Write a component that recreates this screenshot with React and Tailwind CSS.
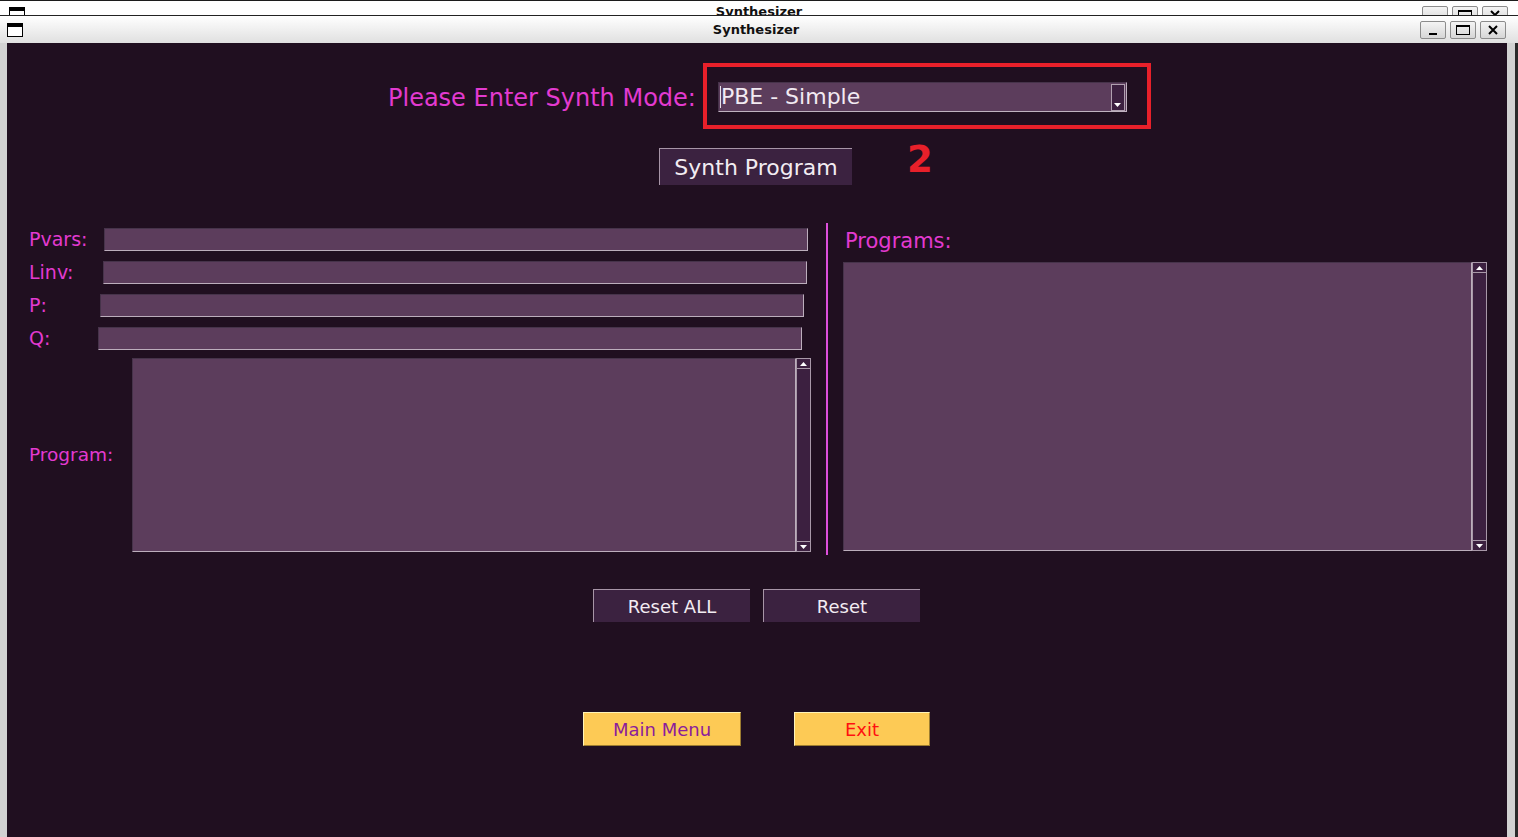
const FIELD = "bg-[#5c3d5c]";

function TitleButtons({ top = false }) {
  const base =
    "w-[26px] h-[18px] rounded-[2px] border border-[#8c8c8c] bg-gradient-to-b from-[#f4f4f4] to-[#d6d6d6] flex items-center justify-center";
  return (
    <div className={`flex gap-[4px] ${top ? "mt-[5px]" : ""}`}>
      <div className={base}>
        <svg width="12" height="12" viewBox="0 0 12 12">
          <rect x="2" y="9" width="8" height="2" fill="#000" />
        </svg>
      </div>
      <div className={base}>
        <svg width="16" height="12" viewBox="0 0 16 12">
          <rect x="1.5" y="1.5" width="13" height="9" fill="none" stroke="#000" strokeWidth="1" />
          <rect x="1" y="1" width="14" height="2" fill="#000" />
        </svg>
      </div>
      <div className={base}>
        <svg width="12" height="12" viewBox="0 0 12 12">
          <path d="M2 2 L10 10 M10 2 L2 10" stroke="#000" strokeWidth="2" />
        </svg>
      </div>
    </div>
  );
}

function WinIcon() {
  return <div className="w-[16px] h-[14px] border border-black border-t-[4px] bg-white" />;
}

function Scrollbar({ h }) {
  return (
    <div
      className="w-[15px] shrink-0 border border-[#a898a8] bg-[#3c2040] flex flex-col justify-between"
      style={{ height: h }}
    >
      <div className="h-[10px] border-b border-[#a898a8] flex items-center justify-center">
        <svg width="7" height="4" viewBox="0 0 7 4">
          <path d="M3.5 0 L7 4 L0 4 Z" fill="#fff" />
        </svg>
      </div>
      <div className="h-[10px] border-t border-[#a898a8] flex items-center justify-center">
        <svg width="7" height="4" viewBox="0 0 7 4">
          <path d="M0 0 L7 0 L3.5 4 Z" fill="#fff" />
        </svg>
      </div>
    </div>
  );
}

function Entry() {
  return (
    <div
      className={`w-[704px] h-[23px] ${FIELD} border-t border-l border-[#46334a] border-b border-r border-b-[#bcaebc] border-r-[#bcaebc]`}
    />
  );
}

function DarkButton({ children, className = "" }) {
  return (
    <div
      className={`bg-[#3b2240] border-t border-l border-[#a795a7] text-[#f2ecf2] flex items-center justify-center ${className}`}
    >
      {children}
    </div>
  );
}

function YellowButton({ children, className = "" }) {
  return (
    <div
      className={`bg-[#fdca55] border border-t-[#fff4b8] border-l-[#fff4b8] border-b-[#9c7c30] border-r-[#9c7c30] flex items-center justify-center text-[18px] ${className}`}
    >
      {children}
    </div>
  );
}

export default function App() {
  const mag = "text-[#e33ad0]";
  return (
    <div className="w-[1518px] h-[837px] overflow-hidden flex flex-col bg-[#d2d2d2] font-['DejaVu_Sans',sans-serif]">
      {/* window behind */}
      <div className="h-[15px] shrink-0 border-t border-[#1c1c1c] bg-white overflow-hidden grid grid-cols-[1fr_auto_1fr] items-start">
        <div className="pl-[9px] pt-[6px]">
          <WinIcon />
        </div>
        <div className="pt-[3px] text-[13px] font-bold leading-[16px] text-[#111]">Synthesizer</div>
        <div className="flex justify-end pr-[10px]">
          <TitleButtons top />
        </div>
      </div>

      {/* main title bar */}
      <div className="h-[28px] shrink-0 border-t border-[#222] bg-gradient-to-b from-white to-[#e0e0e0] grid grid-cols-[1fr_auto_1fr] items-center">
        <div className="pl-[7px]">
          <WinIcon />
        </div>
        <div className="text-[13px] font-bold text-[#111] pr-[6px]">Synthesizer</div>
        <div className="flex justify-end pr-[12px]">
          <TitleButtons />
        </div>
      </div>

      {/* body */}
      <div className="flex-1 flex">
        <div className="w-[7px] shrink-0 bg-[#d2d2d2]" />
        <div className="flex-1 bg-[#200f20] flex flex-col">
          {/* row 1 */}
          <div className="flex items-center pt-[20px] pl-[381px]">
            <div className={`${mag} text-[24px] leading-none pt-[4px]`}>Please Enter Synth Mode:</div>
            <div className="ml-[7px] w-[448px] h-[66px] border-4 border-[#e8202a] pl-[11px] pt-[15px]">
              <div
                className={`w-[409px] h-[30px] ${FIELD} border-t border-l border-[#46334a] border-b border-r border-b-[#c0b2c0] border-r-[#c0b2c0] flex items-center`}
              >
                <div className="w-px h-[22px] bg-[#e8e0e8] ml-[1px]" />
                <div className="text-[22px] leading-none text-[#f2eaf2]">PBE - Simple</div>
                <div className="ml-auto mr-[1px] w-[14px] h-[27px] bg-[#3c2040] border border-[#b0a0b0] flex items-end justify-center pb-[3px]">
                  <svg width="7" height="4" viewBox="0 0 7 4">
                    <path d="M0 0 L7 0 L3.5 4 Z" fill="#fff" />
                  </svg>
                </div>
              </div>
            </div>
          </div>

          {/* row 2 */}
          <div className="flex items-start pt-[19px] pl-[652px]">
            <DarkButton className="w-[193px] h-[37px] text-[22px]">Synth Program</DarkButton>
            <div className="ml-[55px] -mt-[11px] text-[37px] font-bold leading-[46px] text-[#e8202a]">2</div>
          </div>

          {/* main section */}
          <div className="flex items-start mt-[38px] pl-[22px]">
            {/* left */}
            <div className="w-[782px] shrink-0 flex flex-col pt-[5px]">
              <div className="flex flex-col gap-[10px]">
                <div className="flex items-center">
                  <div className={`w-[75px] ${mag} text-[19px] leading-none`}>Pvars:</div>
                  <Entry />
                </div>
                <div className="flex items-center">
                  <div className={`w-[74px] ${mag} text-[19px] leading-none`}>Linv:</div>
                  <Entry />
                </div>
                <div className="flex items-center">
                  <div className={`w-[71px] ${mag} text-[19px] leading-none`}>P:</div>
                  <Entry />
                </div>
                <div className="flex items-center">
                  <div className={`w-[69px] ${mag} text-[19px] leading-none`}>Q:</div>
                  <Entry />
                </div>
              </div>
              <div className="flex items-center mt-[8px]">
                <div className={`w-[103px] ${mag} text-[18.5px] leading-none`}>Program:</div>
                <div
                  className={`w-[664px] h-[194px] ${FIELD} border-t border-l border-[#46334a] border-b border-r border-b-[#bcaebc] border-r-[#bcaebc]`}
                />
                <Scrollbar h={194} />
              </div>
            </div>

            {/* divider */}
            <div className="ml-[15px] w-[2px] h-[332px] bg-[#de4fdc] shrink-0" />

            {/* right */}
            <div className="ml-[15px] flex flex-col">
              <div className={`h-[39px] pt-[6px] ${mag} text-[21px] leading-[24px] pl-[2px]`}>Programs:</div>
              <div className="flex">
                <div
                  className={`w-[629px] h-[289px] ${FIELD} border-t border-l border-[#46334a] border-b border-r border-b-[#bcaebc] border-r-[#bcaebc]`}
                />
                <Scrollbar h={289} />
              </div>
            </div>
          </div>

          {/* reset buttons */}
          <div className="flex mt-[34px] pl-[586px] gap-[13px]">
            <DarkButton className="w-[157px] h-[33px] text-[18px]">Reset ALL</DarkButton>
            <DarkButton className="w-[157px] h-[33px] text-[18px]">Reset</DarkButton>
          </div>

          {/* bottom buttons */}
          <div className="flex mt-[90px] pl-[576px] gap-[53px]">
            <YellowButton className="w-[158px] h-[34px] text-[#8b1d9c]">Main Menu</YellowButton>
            <YellowButton className="w-[136px] h-[34px] text-[#ff1010]">Exit</YellowButton>
          </div>
        </div>
        <div className="w-[8px] shrink-0 bg-[#d2d2d2]" />
        <div className="w-[3px] shrink-0 bg-[#2a2a2a]" />
      </div>
    </div>
  );
}
